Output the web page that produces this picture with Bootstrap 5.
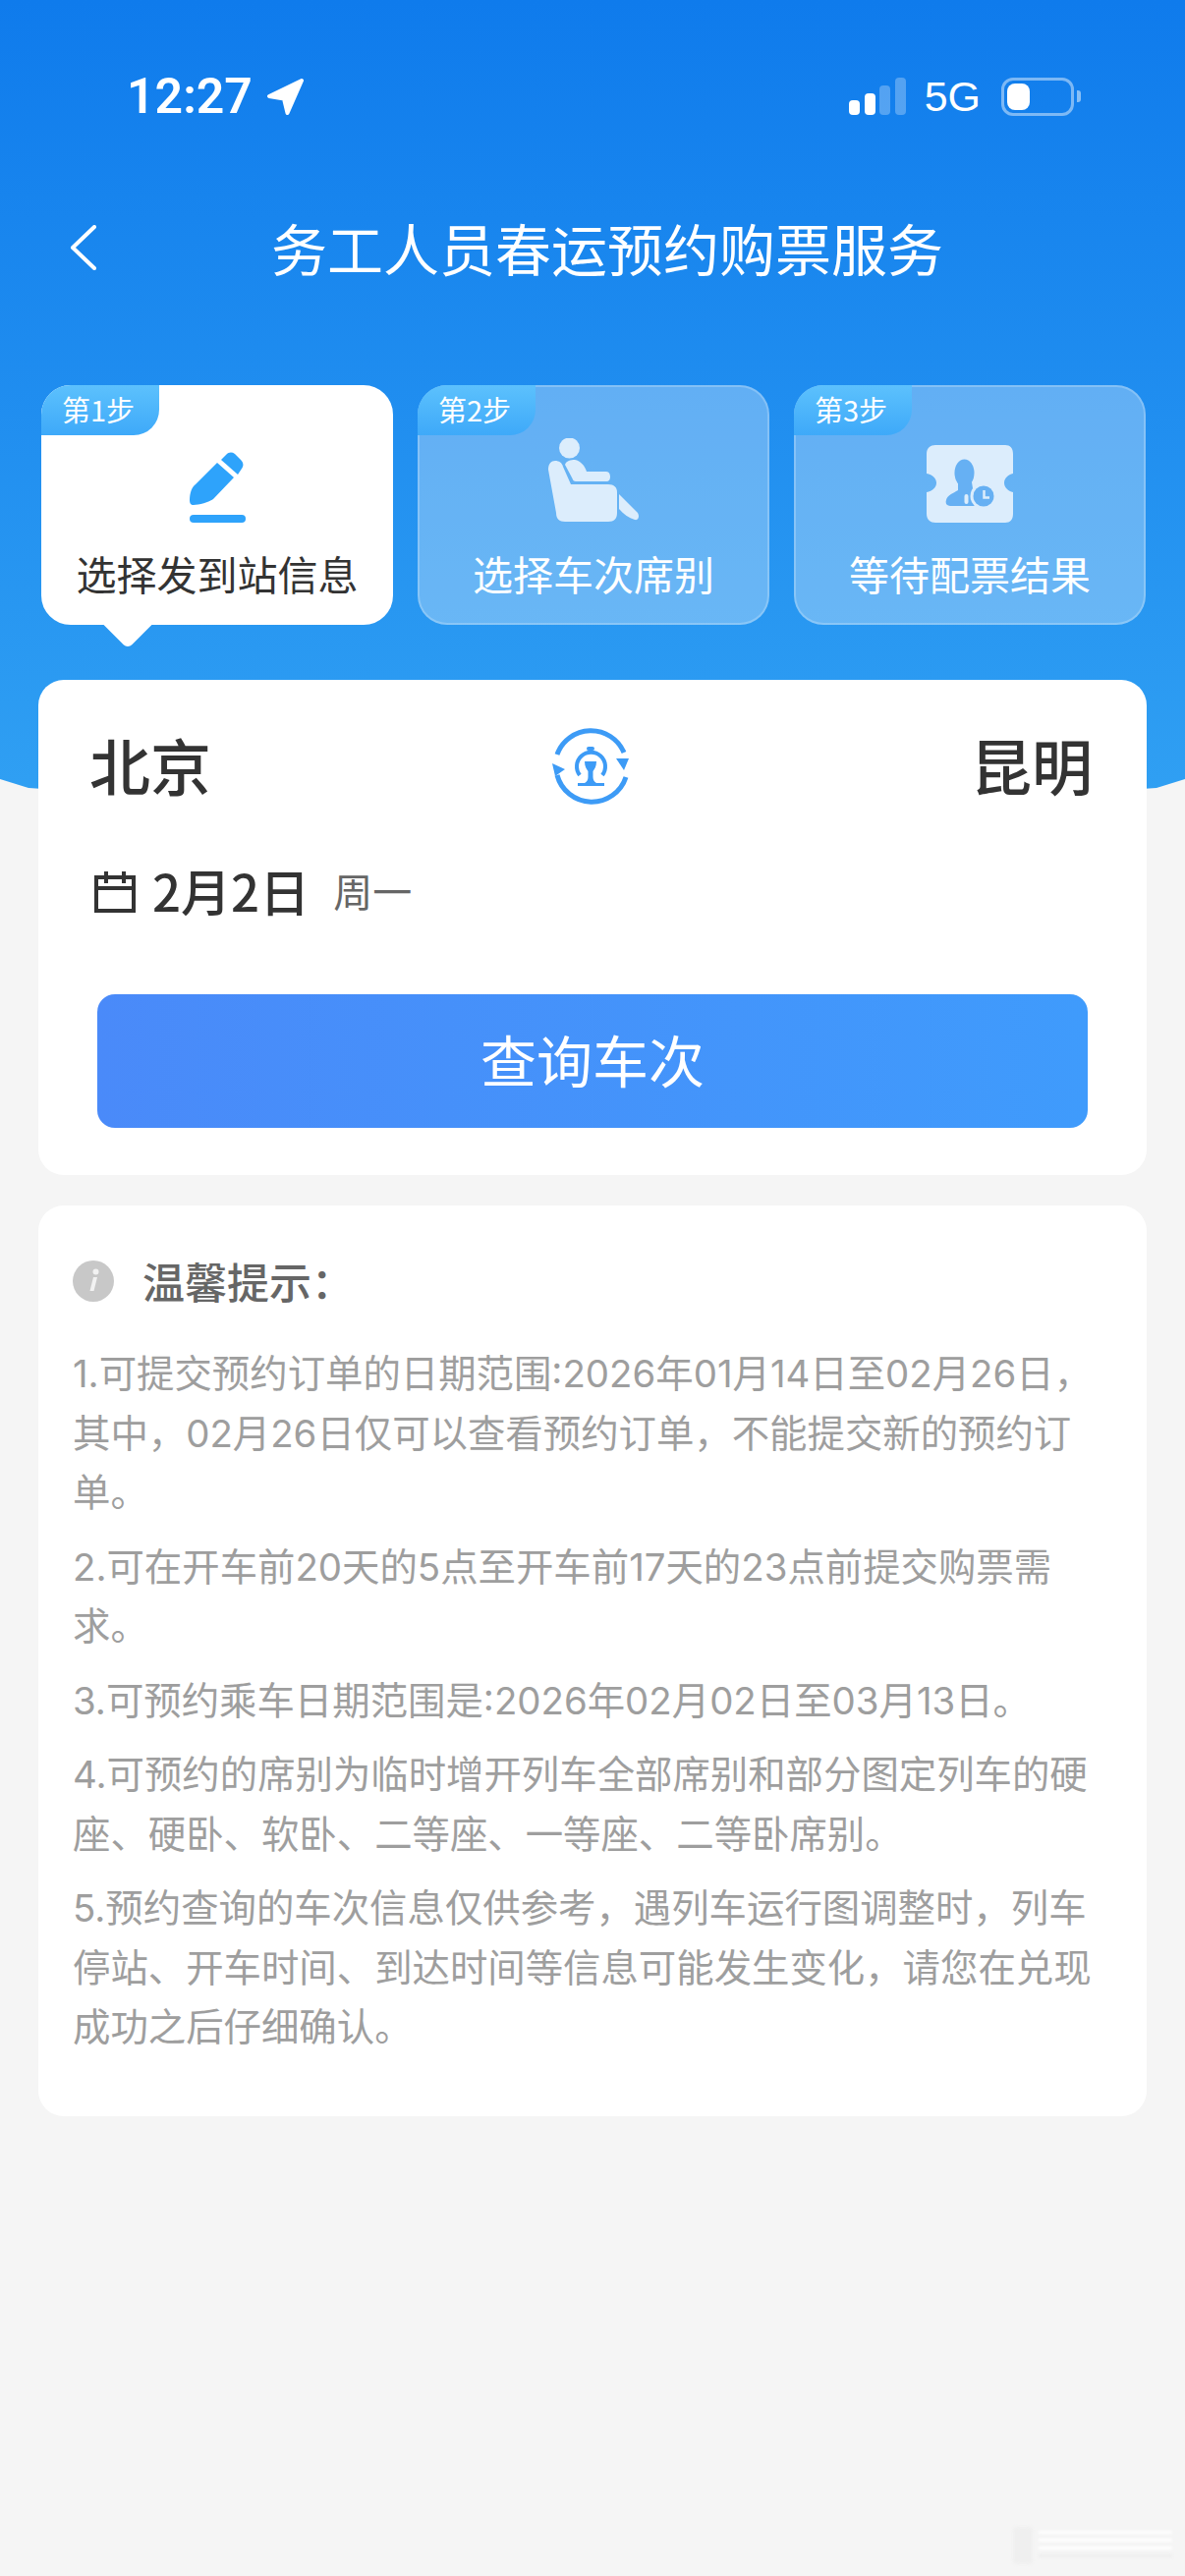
<!DOCTYPE html>
<html lang="zh-CN">
<head>
    <meta charset="UTF-8">
    <meta name="viewport" content="width=device-width, initial-scale=1.0">
    <title>务工人员春运预约购票服务</title>
    <link href="https://cdn.jsdelivr.net/npm/bootstrap@5.3.0/dist/css/bootstrap.min.css" rel="stylesheet">
    <style>
        body {
            background-color: #f5f5f5;
            font-family: "Noto Sans CJK SC", "Liberation Sans", sans-serif;
            color: #333;
        }
        .screen {
            width: 1206px;
            height: 2622px;
            overflow: hidden;
        }
        .hero {
            height: 840px;
            background: linear-gradient(180deg, #0f7bec 0, #31a1f3 100%);
            clip-path: polygon(0 0, 100% 0, 100% 793px, 1177px 802px, 603px 840px, 29px 802px, 0 793px);
        }
        .status-row {
            padding: 78px 106px 0 129px;
            height: 118px;
            color: #fff;
        }
        .clock-text {
            font-family: Roboto, "Liberation Sans", sans-serif;
            font-size: 50px;
            font-weight: 600;
            line-height: 40px;
            margin-right: 14px;
        }
        .net-text {
            font-family: "Liberation Sans", sans-serif;
            font-size: 43px;
            line-height: 40px;
            margin: 0 21px 0 19px;
        }
        .battery-box {
            width: 74px;
            height: 39px;
            border: 3px solid rgba(255, 255, 255, .45);
            border-radius: 12px;
            padding: 3px;
            margin-right: 3px;
        }
        .battery-fill {
            width: 23px;
            height: 100%;
            background: #fff;
            border-radius: 8px;
        }
        .battery-cap {
            width: 4px;
            height: 12px;
            background: rgba(255, 255, 255, .5);
            border-radius: 0 3px 3px 0;
        }
        .nav-row {
            margin-top: 104px;
            height: 60px;
            padding-left: 71px;
        }
        .nav-title {
            margin: -3px 0 0 178px;
            font-size: 57px;
            font-weight: 400;
            line-height: 60px;
            color: #fff;
        }
        .step-row {
            margin-top: 110px;
            padding: 0 40px 0 42px;
            gap: 25px;
        }
        .step-tile {
            width: 358px;
            height: 244px;
            border-radius: 30px;
            border: 2px solid rgba(255, 255, 255, .22);
            background: rgba(255, 255, 255, .3);
            color: #fff;
            padding-bottom: 26px;
        }
        .step-tile.is-current {
            background: #fff;
            border-color: #fff;
            color: #333;
        }
        .step-tile.is-current::after {
            content: "";
            position: absolute;
            left: 68px;
            bottom: -19px;
            width: 36px;
            height: 36px;
            background: #fff;
            border-radius: 0 0 6px 0;
            transform: rotate(45deg);
        }
        .step-tag {
            position: absolute;
            left: -2px;
            top: -2px;
            width: 120px;
            height: 51px;
            padding-left: 21px;
            font-size: 29px;
            line-height: 49px;
            color: #fff;
            border-radius: 30px 0 26px 0;
            background: linear-gradient(180deg, #5cc1fd, #3ea9f9);
            white-space: nowrap;
        }
        .step-label {
            font-size: 41px;
            line-height: 50px;
            text-align: center;
            position: relative;
            z-index: 1;
        }
        .step-icon {
            height: 88px;
            margin-bottom: 26px;
        }
        .sheet {
            position: relative;
            margin: -148px 39px 0;
        }
        .route-card {
            border: 0;
            border-radius: 26px;
            padding: 49px 55px 48px 52px;
        }
        .city-text {
            flex: 1;
            margin-top: -4px;
            font-size: 62px;
            font-weight: 500;
            line-height: 79px;
            color: #333;
        }
        .date-row {
            margin-top: 64px;
            height: 48px;
            padding-left: 5px;
        }
        .date-text {
            margin: -5px 0 0 17px;
            font-size: 51px;
            font-weight: 500;
            line-height: 48px;
        }
        .week-text {
            margin: -4px 0 0 24px;
            font-size: 40px;
            line-height: 48px;
            color: #666;
        }
        .query-btn {
            display: block;
            width: 1008px;
            height: 136px;
            margin: 80px 0 0 8px;
            border: 0;
            border-radius: 18px;
            background: linear-gradient(90deg, #4a8af9, #3f9bfc);
            color: #fff;
            font-size: 57px;
            line-height: 131px;
            padding: 0 0 5px;
        }
        .tips-card {
            border: 0;
            border-radius: 26px;
            margin-top: 31px;
            padding: 52px 50px 60px 35px;
        }
        .tips-head {
            height: 50px;
            margin-bottom: 39px;
        }
        .tips-title {
            margin: -2px 0 0 29px;
            font-size: 43px;
            font-weight: 500;
            line-height: 50px;
            color: #666;
        }
        .tips-text {
            margin: 0 0 15px;
            font-family: Inter, "Noto Sans CJK SC", sans-serif;
            font-size: 38.4px;
            line-height: 60.5px;
            color: #9e9e9e;
        }
        .tips-text:last-child {
            margin-bottom: 0;
        }
        .mark-blur {
            position: absolute;
            left: 1017px;
            top: 2570px;
            filter: blur(1.5px);
        }
    </style>
</head>
<body>
    <div class="screen position-relative">
        <div class="hero">
            <!-- 状态栏 -->
            <div class="status-row d-flex align-items-center">
                <span class="clock-text">12:27</span>
                <svg width="38" height="37" viewBox="0 0 38 37"><path d="M36 2 L3 18 L18 20.500 L21.500 35 Z" fill="#fff" stroke="#fff" stroke-width="4" stroke-linejoin="round"/></svg>
                <div class="ms-auto d-flex align-items-center">
                    <svg width="58" height="38" viewBox="0 0 58 38">
                        <rect x="0" y="23" width="11" height="15" rx="4" fill="#fff"/>
                        <rect x="16" y="16" width="11" height="22" rx="4" fill="#fff"/>
                        <rect x="31" y="8" width="11" height="30" rx="4" fill="#fff" fill-opacity=".28"/>
                        <rect x="47" y="0" width="11" height="38" rx="4" fill="#fff" fill-opacity=".28"/>
                    </svg>
                    <span class="net-text">5G</span>
                    <div class="battery-box"><div class="battery-fill"></div></div>
                    <div class="battery-cap"></div>
                </div>
            </div>

            <!-- 标题栏 -->
            <div class="nav-row d-flex align-items-center">
                <svg width="27" height="46" viewBox="0 0 27 46"><path d="M25 2 L3 23 L25 44" fill="none" stroke="#fff" stroke-width="4" stroke-linecap="round" stroke-linejoin="round"/></svg>
                <h1 class="nav-title">务工人员春运预约购票服务</h1>
            </div>

            <!-- 步骤 -->
            <div class="step-row d-flex">
                <div class="card step-tile is-current position-relative justify-content-end">
                    <div class="step-tag">第1步</div>
                    <div class="step-icon d-flex justify-content-center align-items-end">
                        <svg width="57" height="72" viewBox="0 0 57 72" fill="#2ea3fb">
                            <path d="M28 11 L45 26 L24 48 C20 51 9 54 4 54 C1 54 0 52 0 49 C0 42 2 36 6 33 Z"/>
                            <path d="M32 8 L37 3 C40 0 43 0 46 2 L52 8 C55 11 55 14 53 17 L49 23 Z"/>
                            <rect x="0" y="64" width="57" height="8" rx="4"/>
                        </svg>
                    </div>
                    <div class="step-label">选择发到站信息</div>
                </div>
                <div class="card step-tile position-relative justify-content-end">
                    <div class="step-tag">第2步</div>
                    <div class="step-icon d-flex justify-content-center align-items-end">
                        <svg width="92" height="86" viewBox="0 0 92 86" fill="#dcedfc">
                            <circle cx="21.500" cy="10" r="10.500"/>
                            <path d="M0 32 C0 26 3 23 7 23 C11 23 14 25 15 29 L23 47 H61 C67 47 70 50 70 55 V76 C70 82 67 85 61 85 H17 C11 85 8 82 8 76 Z"/>
                            <path d="M17 27 C18 23 23 22 27 22 C33 23 37 28 39 34 H59 C62 34 63 37 63 39 C63 42 62 44 59 44 H28 C26 44 25 43 24.500 41 Z"/>
                            <path d="M72 57 L91 76 C93 79 92 84 88 83 C82 81 76 77 72 72 Z"/>
                        </svg>
                    </div>
                    <div class="step-label">选择车次席别</div>
                </div>
                <div class="card step-tile position-relative justify-content-end">
                    <div class="step-tag">第3步</div>
                    <div class="step-icon d-flex justify-content-center align-items-end">
                        <svg width="89" height="79" viewBox="0 0 89 79">
                            <path d="M9 0 H80 C85 0 88 3 88 9 V29 C83 30 79 34 79 38.500 C79 43 83 47 88 48 V70 C88 76 85 79 80 79 H9 C4 79 0 76 0 70 V48 C6 47 10 43 10 38.500 C10 34 6 30 0 29 V9 C0 3 4 0 9 0 Z" fill="#dcedfc"/>
                            <ellipse cx="38.500" cy="28.500" rx="10" ry="14" fill="#66b0f3"/>
                            <path d="M32 38 H46 L47 44 C50 45 52 47 54 49 L50 62 H24 C20 62 19 59 20 56 C21 51 27 49 32 46 Z" fill="#66b0f3"/>
                            <rect x="38.500" y="50" width="4" height="10" rx="2" fill="#dcedfc"/>
                            <circle cx="58" cy="52" r="13.500" fill="#dcedfc"/>
                            <circle cx="58" cy="52" r="10.500" fill="#66b0f3"/>
                            <path d="M58.500 46 V53.500 H64" fill="none" stroke="#dcedfc" stroke-width="2.500"/>
                        </svg>
                    </div>
                    <div class="step-label">等待配票结果</div>
                </div>
            </div>
        </div>

        <div class="sheet">
            <!-- 出发到达 -->
            <div class="card route-card">
                <div class="d-flex align-items-center">
                    <div class="city-text">北京</div>
                    <svg width="79" height="79" viewBox="0 0 79 79" fill="#3d9bf6">
                        <path d="M5 27 A36.500 36.500 0 0 1 73 25" fill="none" stroke="#3d9bf6" stroke-width="5"/>
                        <path d="M65 31 L78 31 L73 43 Z"/>
                        <path d="M75 50 A36.500 36.500 0 0 1 5 48" fill="none" stroke="#3d9bf6" stroke-width="5"/>
                        <path d="M0 36 L13 42 L3 49 Z"/>
                        <path d="M28 48 A14.500 14.500 0 1 1 51 48" fill="none" stroke="#3d9bf6" stroke-width="4"/>
                        <rect x="35" y="19" width="8" height="4" rx="2"/>
                        <path d="M33 34 H45 C45 39 43 42 41.500 44 V50 C41.500 53 43 55 45 56 H53 V59 H26 V56 H33 C35 55 36.500 53 36.500 50 V44 C35 42 33 39 33 34 Z"/>
                    </svg>
                    <div class="city-text text-end">昆明</div>
                </div>
                <div class="date-row d-flex align-items-center">
                    <svg width="42" height="42" viewBox="0 0 42 42" fill="none" stroke="#333" stroke-width="4">
                        <path d="M2 6 H40 V40 H2 Z"/>
                        <path d="M2 17 H40 M12 0 V12 M30 0 V12"/>
                    </svg>
                    <span class="date-text">2月2日</span>
                    <span class="week-text">周一</span>
                </div>
                <button type="button" class="btn query-btn">查询车次</button>
            </div>

            <!-- 温馨提示 -->
            <div class="card tips-card">
                <div class="tips-head d-flex align-items-center">
                    <svg width="42" height="42" viewBox="0 0 42 42">
                        <circle cx="21" cy="21" r="21" fill="#c8c8c8"/>
                        <circle cx="23.500" cy="11.500" r="3" fill="#f2f2f2"/>
                        <path d="M21 17 H25 L21.500 31 H17.500 Z" fill="#f2f2f2"/>
                    </svg>
                    <h2 class="tips-title">温馨提示&#xFF1A;</h2>
                </div>
                <p class="tips-text">1.可提交预约订单的日期范围:2026年01月14日至02月26日&#xFF0C;其中&#xFF0C;02月26日仅可以查看预约订单&#xFF0C;不能提交新的预约订单。</p>
                <p class="tips-text">2.可在开车前20天的5点至开车前17天的23点前提交购票需求。</p>
                <p class="tips-text">3.可预约乘车日期范围是:2026年02月02日至03月13日。</p>
                <p class="tips-text">4.可预约的席别为临时增开列车全部席别和部分图定列车的硬座、硬卧、软卧、二等座、一等座、二等卧席别。</p>
                <p class="tips-text">5.预约查询的车次信息仅供参考&#xFF0C;遇列车运行图调整时&#xFF0C;列车停站、开车时间、到达时间等信息可能发生变化&#xFF0C;请您在兑现成功之后仔细确认。</p>
            </div>
        </div>

        <!-- 右下角水印 -->
        <svg class="mark-blur" width="178" height="42" viewBox="0 0 178 42" fill="#fff">
            <rect x="14" y="2" width="20" height="38" rx="4" fill="#efefef"/>
            <rect x="40" y="6" width="136" height="3"/>
            <rect x="40" y="14" width="136" height="3"/>
            <rect x="40" y="22" width="136" height="3"/>
            <rect x="40" y="30" width="136" height="3" fill="#ededed"/>
        </svg>
    </div>
    <script src="https://cdn.jsdelivr.net/npm/bootstrap@5.3.0/dist/js/bootstrap.bundle.min.js"></script>
</body>
</html>
